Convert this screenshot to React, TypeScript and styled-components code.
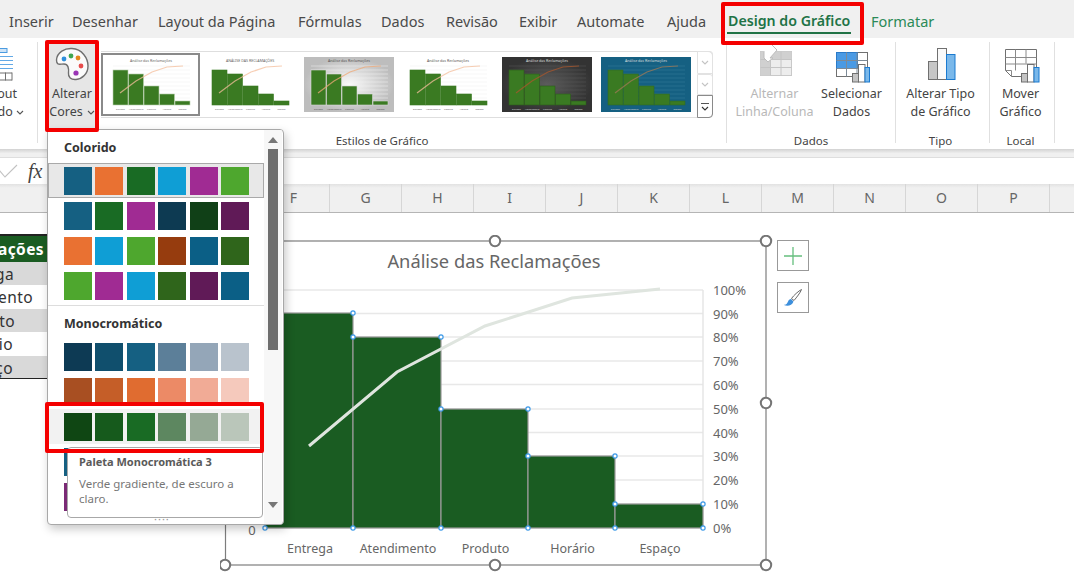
import React from 'react'
import styled, { createGlobalStyle } from 'styled-components'

const FONT = '"Noto Sans", "Open Sans", "Liberation Sans", sans-serif'

const TABS = [
    { label: 'Inserir', width: 63 },
    { label: 'Desenhar', width: 86 },
    { label: 'Layout da Página', width: 140 },
    { label: 'Fórmulas', width: 83 },
    { label: 'Dados', width: 65 },
    { label: 'Revisão', width: 73 },
    { label: 'Exibir', width: 58 },
    { label: 'Automate', width: 90 },
    { label: 'Ajuda', width: 61 },
]

const COLUMNS = ['F', 'G', 'H', 'I', 'J', 'K', 'L', 'M', 'N', 'O', 'P', '']

const TABLE_ROWS = [
    { text: 'Entrega', inset: 33, shaded: true },
    { text: 'Atendimento', inset: 14, shaded: false },
    { text: 'Produto', inset: 32, shaded: true },
    { text: 'Horário', inset: 34, shaded: false },
    { text: 'Espaço', inset: 34, shaded: true },
]

const COLORFUL = [
    ['#156082', '#e97132', '#196b24', '#0f9ed5', '#a02b93', '#4ea72e'],
    ['#156082', '#196b24', '#a02b93', '#0d3a52', '#104017', '#601a57'],
    ['#e97132', '#0f9ed5', '#4ea72e', '#963c0e', '#0b5f86', '#2f651b'],
    ['#4ea72e', '#a02b93', '#0f9ed5', '#2f651b', '#601a57', '#0b5f86'],
]

const MONOCHROME = [
    ['#0d3a54', '#104f6d', '#156082', '#5c7f99', '#94a6b8', '#b9c3cd'],
    ['#a84f22', '#c55e28', '#e06c30', '#ec8a66', '#f1ab96', '#f5c9bc'],
    ['#0f4613', '#165a1c', '#196b24', '#5d8760', '#95a995', '#bac6ba'],
    ['#156082', '#3a7fa0', '#5c9ab5', '#86b4c8', '#abcbd8', '#cfe0e8'],
    ['#7a2a75', '#8e3388', '#a02b93', '#b565ac', '#cb94c5', '#dfbfdb'],
]

const THUMBS = [
    { bg: '#ffffff', barStroke: '#b9d0ae', line: '#f4bd9b', text: '#666666', grid: '#eeeeee', title: 'Análise das Reclamações', selected: true },
    { bg: '#ffffff', barStroke: '#3a7a22', line: '#f4bd9b', text: '#666666', grid: '#ffffff', title: 'ANÁLISE DAS RECLAMAÇÕES', selected: false },
    { bg: 'url(#thumbGrey)', barStroke: '#d8d8d8', line: '#eda877', text: '#555555', grid: '#f2f2f2', title: 'Análise das Reclamações', selected: false },
    { bg: '#ffffff', barStroke: '#3a7a22', line: '#f4bd9b', text: '#555555', grid: '#eeeeee', title: 'Análise das Reclamações', selected: false },
    { bg: 'url(#thumbDark)', barStroke: '#2d5c1c', line: '#a9572c', text: '#dddddd', grid: '#5a5a5a', title: 'Análise das Reclamações', selected: false },
    { bg: '#156082', barStroke: '#2d6a2a', line: '#a07a55', text: '#dddddd', grid: '#3a7c9b', title: 'Análise das Reclamações', selected: false },
]

const THUMB_BARS = [
    { x: 7, y: 13, w: 15 },
    { x: 22.5, y: 17, w: 15 },
    { x: 38, y: 29, w: 15 },
    { x: 53.5, y: 37, w: 15 },
    { x: 69, y: 44, w: 15 },
]

const CHART_BARS = [
    { x: 265, y: 313, w: 88, label: 'Entrega' },
    { x: 353, y: 337, w: 88, label: 'Atendimento' },
    { x: 441, y: 409, w: 87, label: 'Produto' },
    { x: 528, y: 456, w: 87, label: 'Horário' },
    { x: 615, y: 504, w: 88, label: 'Espaço' },
]

const PERCENTS = [
    { label: '100%', y: 290 },
    { label: '90%', y: 313.5 },
    { label: '80%', y: 337 },
    { label: '70%', y: 361 },
    { label: '60%', y: 384.5 },
    { label: '50%', y: 409 },
    { label: '40%', y: 432.5 },
    { label: '30%', y: 456 },
    { label: '20%', y: 480 },
    { label: '10%', y: 504 },
    { label: '0%', y: 528 },
]

const POINTS = [
    [265, 528], [353, 528], [441, 528], [528, 528], [615, 528], [703, 528],
    [353, 313], [353, 337], [441, 337], [441, 409], [528, 409], [528, 456], [615, 456], [615, 504], [703, 504],
]

const HANDLES = [
    [495, 241], [766, 241], [766, 403], [766, 565], [495, 565], [225, 565],
]

const Chevron = ({ color = '#555555' }: { color?: string }) => (
    <ChevronSvg viewBox="0 0 8 5" width="8" height="5">
        <path d="M1 1l3 3 3-3" fill="none" stroke={color} strokeWidth="1.1" />
    </ChevronSvg>
)

const ThumbChart = ({ thumb }: { thumb: (typeof THUMBS)[number] }) => (
    <svg viewBox="0 0 90 55" width="90" height="55">
        <rect width="90" height="55" fill={thumb.bg} />
        {[9, 13, 17, 21, 25, 29, 33, 37, 41, 45].map((y) => (
            <line key={y} x1="7" x2="84" y1={y} y2={y} stroke={thumb.grid} strokeWidth="0.5" />
        ))}
        {THUMB_BARS.map((bar) => (
            <rect key={bar.x} x={bar.x} y={bar.y} width={bar.w} height={48 - bar.y} fill="#3a7a22" stroke={thumb.barStroke} strokeWidth="0.6" />
        ))}
        <polyline points="14,36 30,24 46,15 61,10 77,9" fill="none" stroke={thumb.line} strokeWidth="1.2" strokeOpacity="0.75" />
        <text x="45" y="5" fontSize="3.6" textAnchor="middle" fill={thumb.text} fontFamily={FONT}>{thumb.title}</text>
        {CHART_BARS.map((bar, i) => (
            <text key={bar.label} x={14.5 + i * 15.5} y="53" fontSize="2.4" textAnchor="middle" fill={thumb.text} fontFamily={FONT}>{bar.label}</text>
        ))}
    </svg>
)

const App = () => {
    return (
        <Page>
            <GlobalStyle />
            <TabBar>
                {TABS.map((tab) => (
                    <Tab key={tab.label} $width={tab.width}>{tab.label}</Tab>
                ))}
                <ActiveTab>Design do Gráfico</ActiveTab>
                <ContextTab>Formatar</ContextTab>
            </TabBar>

            <Ribbon>
                <ClippedGroup>
                    <svg viewBox="0 42 20 42" width="20" height="42">
                        <rect x="-6" y="48" width="14" height="4" fill="#cfe4f7" stroke="#4a9be0" />
                        <path d="M0 56h14M0 60h14M0 64h14M0 68h14" stroke="#62a9e6" strokeWidth="1.2" />
                        <path d="M-1 72.5h14M-1 79.5h14M6.5 72v8M13 72v8" stroke="#707070" fill="none" />
                    </svg>
                    <ClippedLabel>Layout</ClippedLabel>
                    <ClippedSecondLine>Rápido <Chevron /></ClippedSecondLine>
                </ClippedGroup>

                <StylesGroup>
                    <StylesBody>
                        <HoveredButton>
                            <svg viewBox="52 42 40 42" width="40" height="42">
                                <path d="M56.5 60C57 52 65 48 72 48.5 82 49 88 58 88 66 88 74 82 79 76 79.5 71 80 68 77 68.5 73 69 68 68 64 64 64 60 64 56.5 66 56.5 60Z" fill="#fbfbfb" stroke="#6f6f6f" strokeWidth="1.4" />
                                <circle cx="64" cy="59" r="2.4" fill="#2f8fdc" />
                                <circle cx="71" cy="56" r="2.4" fill="#3fa650" />
                                <circle cx="78" cy="58" r="2.4" fill="#e5861d" />
                                <circle cx="81" cy="66" r="2.4" fill="#e84c4c" />
                                <circle cx="76" cy="73" r="2.6" fill="#9a35b5" />
                            </svg>
                            <ButtonText>Alterar</ButtonText>
                            <ButtonText>Cores <Chevron /></ButtonText>
                        </HoveredButton>
                        <Gallery>
                            {THUMBS.map((thumb, i) => (
                                <ThumbCell key={i} $selected={thumb.selected}>
                                    <ThumbChart thumb={thumb} />
                                </ThumbCell>
                            ))}
                            <GalleryNav>
                                <NavButton $height={23}>
                                    <Chevron color="#c4c4c4" />
                                </NavButton>
                                <NavButton $height={21}>
                                    <Chevron color="#c4c4c4" />
                                </NavButton>
                                <NavMore>
                                    <NavBar />
                                    <Chevron color="#333333" />
                                </NavMore>
                            </GalleryNav>
                        </Gallery>
                        <svg width="0" height="0">
                            <defs>
                                <radialGradient id="thumbGrey">
                                    <stop offset="0%" stopColor="#fafafa" />
                                    <stop offset="100%" stopColor="#bdbdbd" />
                                </radialGradient>
                                <radialGradient id="thumbDark">
                                    <stop offset="0%" stopColor="#5c5c5c" />
                                    <stop offset="100%" stopColor="#333333" />
                                </radialGradient>
                            </defs>
                        </svg>
                    </StylesBody>
                    <GroupLabel>Estilos de Gráfico</GroupLabel>
                </StylesGroup>

                <DataGroup>
                    <GroupBody>
                        <RibbonButton $width={78}>
                            <svg viewBox="756 42 40 42" width="40" height="42">
                                <rect x="761.5" y="51.5" width="31" height="24" fill="#ededed" stroke="#c9c9c9" />
                                <path d="M761.5 51.5h31v8h-21v16h-10z" fill="#d0d0d0" />
                                <path d="M761.5 67.5h31M771.5 51.5v24M782 51.5v24M761.5 59.5h31" stroke="#c4c4c4" />
                                <path d="M765 52v6l4 4 5-4h-3l7-8-5-5" fill="#ffffff" stroke="#bdbdbd" />
                            </svg>
                            <DisabledText>Alternar</DisabledText>
                            <DisabledText>Linha/Coluna</DisabledText>
                        </RibbonButton>
                        <RibbonButton $width={70}>
                            <svg viewBox="833 42 40 42" width="40" height="42">
                                <rect x="837.5" y="52.5" width="31" height="24" fill="#ffffff" stroke="#707070" />
                                <rect x="837.5" y="52.5" width="21" height="16" fill="#4a9ae4" stroke="#2a7ac8" />
                                <path d="M837.5 60.5h31M847.5 52.5v24M858 52.5v24M837.5 68.5h31" stroke="#7d8a96" />
                                <rect x="853.5" y="73.5" width="6" height="8.5" fill="#c4c4c4" stroke="#707070" />
                                <rect x="859.5" y="64.5" width="6.5" height="17.5" fill="#ffffff" stroke="#707070" />
                                <rect x="866" y="67.5" width="4.5" height="14.5" fill="#7ab8ea" stroke="#1a7ad0" />
                            </svg>
                            <ButtonText>Selecionar</ButtonText>
                            <ButtonText>Dados</ButtonText>
                        </RibbonButton>
                    </GroupBody>
                    <GroupLabel>Dados</GroupLabel>
                </DataGroup>

                <TypeGroup>
                    <GroupBody>
                        <RibbonButton $width={80}>
                            <svg viewBox="921 42 40 42" width="40" height="42">
                                <rect x="928.5" y="61.5" width="9" height="18" fill="#c6c6c6" stroke="#707070" />
                                <rect x="937.5" y="48.5" width="9" height="31" fill="#fafafa" stroke="#707070" />
                                <rect x="946.5" y="54.5" width="8.5" height="25" fill="#7ab8ea" stroke="#1a7ad0" />
                            </svg>
                            <ButtonText>Alterar Tipo</ButtonText>
                            <ButtonText>de Gráfico</ButtonText>
                        </RibbonButton>
                    </GroupBody>
                    <GroupLabel>Tipo</GroupLabel>
                </TypeGroup>

                <LocationGroup>
                    <GroupBody>
                        <RibbonButton $width={62}>
                            <svg viewBox="1001 42 40 42" width="40" height="42">
                                <path d="M1005.5 49.5h31v27h-25l-6-6z" fill="#ffffff" stroke="#707070" />
                                <path d="M1005.5 57.5h31M1005.5 64h31M1015.5 49.5v21M1026 49.5v14M1005.5 70.5h6v6" fill="none" stroke="#8a8a8a" />
                                <rect x="1021.5" y="73.5" width="6" height="8.5" fill="#c4c4c4" stroke="#707070" />
                                <rect x="1027.5" y="64.5" width="6.5" height="17.5" fill="#ffffff" stroke="#707070" />
                                <rect x="1034" y="67.5" width="5" height="14.5" fill="#7ab8ea" stroke="#1a7ad0" />
                            </svg>
                            <ButtonText>Mover</ButtonText>
                            <ButtonText>Gráfico</ButtonText>
                        </RibbonButton>
                    </GroupBody>
                    <GroupLabel>Local</GroupLabel>
                </LocationGroup>
            </Ribbon>

            <RibbonGap />

            <FormulaBar>
                <svg viewBox="0 0 18 14" width="18" height="14">
                    <path d="M-1 6l6 7L17 1" fill="none" stroke="#c2c2c2" strokeWidth="1.1" />
                </svg>
                <FxLabel>fx</FxLabel>
            </FormulaBar>

            <ColumnHeaders>
                {COLUMNS.map((col, i) => (
                    <ColumnHeader key={i}>{col}</ColumnHeader>
                ))}
            </ColumnHeaders>

            <Sheet>
                <DataTable>
                    <TableHead>Reclamações</TableHead>
                    {TABLE_ROWS.map((row) => (
                        <TableRow key={row.text} $shaded={row.shaded} $inset={row.inset}>
                            {row.text}
                        </TableRow>
                    ))}
                </DataTable>
            </Sheet>

            <ChartLayer viewBox="220 235 560 340" width="560" height="340">
                <rect x="225.5" y="241" width="540.5" height="324" fill="#ffffff" stroke="#7d7d7d" strokeWidth="1.2" />
                <text x="494" y="268" fontSize="18.3" textAnchor="middle" fill="#666666" fontFamily={FONT}>Análise das Reclamações</text>
                {PERCENTS.map((p) => (
                    <line key={p.label} x1="265" x2="703" y1={p.y} y2={p.y} stroke="#e8e8e8" strokeWidth="1.4" />
                ))}
                <line x1="703" x2="703" y1="290" y2="528" stroke="#e4e4e4" strokeWidth="1.4" />
                {CHART_BARS.map((bar) => (
                    <rect key={bar.label} x={bar.x} y={bar.y} width={bar.w} height={528 - bar.y} fill="#1a5c22" stroke="#9a9a9a" strokeWidth="1.2" />
                ))}
                <polyline points="309,446 397,372 485,326 572,298 660,289" fill="none" stroke="#dfe5df" strokeWidth="3" />
                {POINTS.map(([cx, cy]) => (
                    <circle key={`${cx}-${cy}`} cx={cx} cy={cy} r="2.1" fill="#ffffff" stroke="#3d9ae8" strokeWidth="1.2" />
                ))}
                {PERCENTS.map((p) => (
                    <text key={p.label} x="713" y={p.y + 5} fontSize="13" fill="#666666" fontFamily={FONT}>{p.label}</text>
                ))}
                <text x="252" y="535" fontSize="13" textAnchor="middle" fill="#666666" fontFamily={FONT}>0</text>
                {CHART_BARS.map((bar) => (
                    <text key={bar.label} x={bar.x + bar.w / 2 + 1} y="553" fontSize="12.5" textAnchor="middle" fill="#666666" fontFamily={FONT}>{bar.label}</text>
                ))}
                {HANDLES.map(([cx, cy]) => (
                    <circle key={`${cx}-${cy}`} cx={cx} cy={cy} r="5.2" fill="#ffffff" stroke="#757575" strokeWidth="2" />
                ))}
            </ChartLayer>

            <ChartTools>
                <ChartTool>
                    <svg viewBox="0 0 20 20" width="20" height="20">
                        <path d="M10 1v18M1 10h18" stroke="#66bf7e" strokeWidth="1.3" fill="none" />
                    </svg>
                </ChartTool>
                <ChartTool>
                    <svg viewBox="0 0 22 22" width="22" height="22">
                        <path d="M19.5 2.5c-3 1.5-8 6-10 9l2.5 2c2.5-3 6.5-8 7.5-11z" fill="#ffffff" stroke="#6a6a6a" />
                        <path d="M9 12c-3 0-3 4-4.5 5-1 .7-2 .8-2.5 1 3 1.3 8 1 9.5-3.5z" fill="#3d8fdc" />
                    </svg>
                </ChartTool>
            </ChartTools>

            <ColorMenu>
                <MenuList>
                    <SectionTitle>Colorido</SectionTitle>
                    {COLORFUL.map((row, i) => (
                        <PaletteRow key={i} $state={i === 0 ? 'selected' : 'idle'}>
                            {row.map((color, j) => (
                                <Swatch key={j} $color={color} />
                            ))}
                        </PaletteRow>
                    ))}
                    <MenuDivider />
                    <SectionTitle>Monocromático</SectionTitle>
                    {MONOCHROME.map((row, i) => (
                        <PaletteRow key={i} $state={i === 2 ? 'hover' : 'idle'}>
                            {row.map((color, j) => (
                                <Swatch key={j} $color={color} />
                            ))}
                        </PaletteRow>
                    ))}
                </MenuList>
                <ScrollTrack>
                    <ArrowUp />
                    <ScrollThumb />
                    <ArrowDown />
                </ScrollTrack>
                <Tooltip>
                    <TooltipTitle>Paleta Monocromática 3</TooltipTitle>
                    <TooltipText>Verde gradiente, de escuro a claro.</TooltipText>
                </Tooltip>
                <Grip>····</Grip>
            </ColorMenu>

            <RedFrame $left={45} $top={40} $width={54} $height={92} />
            <RedFrame $left={721} $top={2} $width={143} $height={43} />
            <RedFrame $left={45} $top={402} $width={219} $height={51} />
        </Page>
    )
}

export default App

const GlobalStyle = createGlobalStyle`
    html, body {
        margin: 0;
        padding: 0;
        background: #ffffff;
    }
    * {
        box-sizing: border-box;
    }
`

const Page = styled.div`
    position: relative;
    display: flex;
    flex-direction: column;
    width: 1074px;
    height: 578px;
    overflow: hidden;
    font-family: ${FONT};
    color: #444444;
    background: #ffffff;
`

const TabBar = styled.div`
    display: flex;
    align-items: center;
    flex: 0 0 38px;
    padding: 3px 0 0 9px;
    font-size: 14.5px;
    background: #f0f0f0;
    white-space: nowrap;
`

const Tab = styled.div<{ $width: number }>`
    flex: 0 0 ${(props) => props.$width}px;
    color: #4a4a4a;
`

const ActiveTab = styled.div`
    position: relative;
    flex: 0 0 143px;
    font-size: 14.2px;
    font-weight: 600;
    color: #217346;

    &::after {
        content: '';
        position: absolute;
        left: -1px;
        bottom: -4px;
        width: 124px;
        height: 2px;
        background: #217346;
    }
`

const ContextTab = styled.div`
    color: #2b8a57;
`

const Ribbon = styled.div`
    display: flex;
    flex: 0 0 111px;
    padding-top: 4px;
    background: #ffffff;
`

const RibbonGroup = styled.div`
    display: flex;
    flex-direction: column;
    height: 101px;
    border-right: 1px solid #e0e0e0;
`

const ClippedGroup = styled(RibbonGroup)`
    align-items: flex-end;
    width: 38px;
    padding-right: 13px;
    overflow: hidden;
    font-size: 12.5px;
    line-height: 18px;

    > svg {
        flex: 0 0 43px;
        margin-right: 5px;
    }
`

const ClippedLabel = styled.div`
    padding-right: 7px;
    white-space: nowrap;
`

const ClippedSecondLine = styled.div`
    white-space: nowrap;
`

const StylesGroup = styled(RibbonGroup)`
    width: 689px;
`

const DataGroup = styled(RibbonGroup)`
    width: 169px;
`

const TypeGroup = styled(RibbonGroup)`
    width: 94px;
    padding: 0 9px 0 5px;
`

const LocationGroup = styled(RibbonGroup)`
    width: 65px;
    padding-right: 3px;
`

const GroupBody = styled.div`
    display: flex;
    justify-content: center;
    gap: 3px;
    flex: 0 0 92px;
`

const StylesBody = styled.div`
    display: flex;
    gap: 4px;
    flex: 0 0 92px;
    padding-left: 9px;
`

const GroupLabel = styled.div`
    height: 14px;
    font-size: 11.5px;
    line-height: 14px;
    text-align: center;
    white-space: nowrap;
`

const RibbonButton = styled.div<{ $width: number }>`
    display: flex;
    flex-direction: column;
    align-items: center;
    flex: 0 0 ${(props) => props.$width}px;
    width: ${(props) => props.$width}px;

    > svg {
        margin-bottom: 1px;
    }
`

const HoveredButton = styled(RibbonButton).attrs({ $width: 50 })`
    height: 88px;
    background: #e6e6e6;
`

const ButtonText = styled.div`
    display: flex;
    align-items: center;
    gap: 4px;
    height: 18px;
    font-size: 12.5px;
    line-height: 18px;
    color: #444444;
    white-space: nowrap;
`

const DisabledText = styled(ButtonText)`
    color: #b8b8b8;
`

const ChevronSvg = styled.svg`
    display: inline-block;
    vertical-align: middle;
`

const Gallery = styled.div`
    display: flex;
    width: 612px;
    height: 67px;
    margin-top: 9px;
    border: 1px solid #dedede;
    border-left: 0;
    border-radius: 0 5px 5px 0;
`

const ThumbCell = styled.div<{ $selected: boolean }>`
    display: flex;
    align-items: center;
    justify-content: center;
    width: 99px;
    height: 63px;
    margin-top: 1px;
    border: ${(props) => (props.$selected ? '2px solid #8a8a8a' : '2px solid transparent')};
`

const GalleryNav = styled.div`
    display: flex;
    flex-direction: column;
    width: 16px;
    margin: -1px -1px -1px auto;
`

const NavButton = styled.div<{ $height: number }>`
    display: flex;
    align-items: center;
    justify-content: center;
    height: ${(props) => props.$height}px;
    border: 1px solid #e2e2e2;
    border-radius: 0 3px 0 0;
`

const NavMore = styled.div`
    display: flex;
    flex-direction: column;
    align-items: center;
    justify-content: center;
    gap: 2px;
    height: 23px;
    border: 1px solid #8a8a8a;
    border-radius: 0 0 4px 0;
`

const NavBar = styled.div`
    width: 8px;
    height: 1px;
    background: #555555;
`

const RibbonGap = styled.div`
    flex: 0 0 9px;
    background: linear-gradient(#d2d2d2, #f0f0f0 55%);
    border-bottom: 1px solid #dedede;
`

const FormulaBar = styled.div`
    display: flex;
    align-items: center;
    gap: 10px;
    flex: 0 0 26px;
    background: #ffffff;
`

const FxLabel = styled.div`
    font-family: 'Liberation Serif', serif;
    font-size: 20px;
    font-style: italic;
    color: #444444;
`

const ColumnHeaders = styled.div`
    display: flex;
    flex: 0 0 29px;
    padding-left: 257px;
    background: linear-gradient(#e2e2e2, #f0f0f0 14%);
    border-bottom: 1px solid #b5b5b5;
`

const ColumnHeader = styled.div`
    flex: 0 0 72px;
    padding-top: 4px;
    border-left: 1px solid #d6d6d6;
    font-size: 14px;
    line-height: 20px;
    text-align: center;
    color: #666666;
`

const Sheet = styled.div`
    flex: 1;
    padding-top: 21px;
    background: #ffffff;
`

const DataTable = styled.div`
    width: 47px;
    overflow: hidden;
`

const TableHead = styled.div`
    display: flex;
    justify-content: flex-end;
    height: 28px;
    padding-right: 3px;
    border-top: 2px solid #222222;
    font-size: 15.5px;
    font-weight: 700;
    letter-spacing: 0.4px;
    line-height: 26px;
    color: #ffffff;
    background: #1a5c22;
    white-space: nowrap;
`

const TableRow = styled.div<{ $shaded: boolean; $inset: number }>`
    display: flex;
    justify-content: flex-end;
    height: 23.4px;
    padding-right: ${(props) => props.$inset}px;
    font-size: 15.5px;
    letter-spacing: 0.4px;
    line-height: 24.5px;
    color: #333333;
    background: ${(props) => (props.$shaded ? '#d9d9d9' : '#ffffff')};
    white-space: nowrap;

    &:last-child {
        border-bottom: 1px solid #222222;
    }
`

const ChartLayer = styled.svg`
    position: absolute;
    left: 220px;
    top: 235px;
`

const ChartTools = styled.div`
    position: absolute;
    left: 777px;
    top: 240px;
    display: flex;
    flex-direction: column;
    gap: 11px;
`

const ChartTool = styled.div`
    display: flex;
    align-items: center;
    justify-content: center;
    width: 32px;
    height: 31px;
    border: 1px solid #999999;
    background: #ffffff;
`

const ColorMenu = styled.div`
    position: absolute;
    left: 47px;
    top: 129px;
    display: flex;
    width: 237px;
    height: 396px;
    padding-right: 1px;
    overflow: hidden;
    border: 1px solid #a8a8a8;
    border-radius: 0 4px 4px 4px;
    background: #ffffff;
    box-shadow: 2px 4px 10px rgba(0, 0, 0, 0.22);
`

const MenuList = styled.div`
    flex: 0 0 216px;
    height: 386px;
    overflow: hidden;
`

const SectionTitle = styled.div`
    height: 33px;
    padding-left: 16px;
    font-size: 12.5px;
    font-weight: 700;
    line-height: 36px;
    color: #333333;
`

const PaletteRow = styled.div<{ $state: 'idle' | 'hover' | 'selected' }>`
    display: flex;
    align-items: center;
    gap: 3.4px;
    height: 35px;
    padding-left: 16px;
    background: ${(props) =>
        props.$state === 'selected' ? '#e8e8e8' : props.$state === 'hover' ? '#f2f2f2' : 'transparent'};
    outline: ${(props) => (props.$state === 'selected' ? '1px solid #a9a9a9' : 'none')};
    outline-offset: -1px;
`

const Swatch = styled.div<{ $color: string }>`
    flex: 0 0 28px;
    height: 28px;
    background: ${(props) => props.$color};
`

const MenuDivider = styled.div`
    height: 3px;
    border-bottom: 1px solid #dddddd;
`

const ScrollTrack = styled.div`
    display: flex;
    flex-direction: column;
    align-items: center;
    flex: 0 0 18px;
    padding-top: 7px;
    background: #f7f7f7;
`

const ArrowUp = styled.div`
    width: 0;
    height: 0;
    border-left: 5px solid transparent;
    border-right: 5px solid transparent;
    border-bottom: 6px solid #777777;
`

const ArrowDown = styled.div`
    width: 0;
    height: 0;
    margin-top: 152px;
    border-left: 5px solid transparent;
    border-right: 5px solid transparent;
    border-top: 6px solid #777777;
`

const ScrollThumb = styled.div`
    width: 10px;
    height: 201px;
    margin-top: 6px;
    background: #6e6e6e;
`

const Tooltip = styled.div`
    position: absolute;
    left: 19px;
    top: 317px;
    width: 196px;
    height: 71px;
    padding: 6px 11px;
    border: 1px solid #a8a8a8;
    border-radius: 4px;
    background: #ffffff;
`

const TooltipTitle = styled.div`
    font-size: 11px;
    font-weight: 700;
    line-height: 16px;
    color: #5a5a5a;
`

const TooltipText = styled.div`
    margin-top: 6px;
    font-size: 11.5px;
    line-height: 15px;
    color: #777777;
`

const Grip = styled.div`
    position: absolute;
    left: 106px;
    bottom: 0;
    font-size: 11px;
    line-height: 10px;
    letter-spacing: 1px;
    color: #999999;
`

const RedFrame = styled.div<{ $left: number; $top: number; $width: number; $height: number }>`
    position: absolute;
    left: ${(props) => props.$left}px;
    top: ${(props) => props.$top}px;
    width: ${(props) => props.$width}px;
    height: ${(props) => props.$height}px;
    border: 4px solid #f40000;
    border-radius: 2px;
`
